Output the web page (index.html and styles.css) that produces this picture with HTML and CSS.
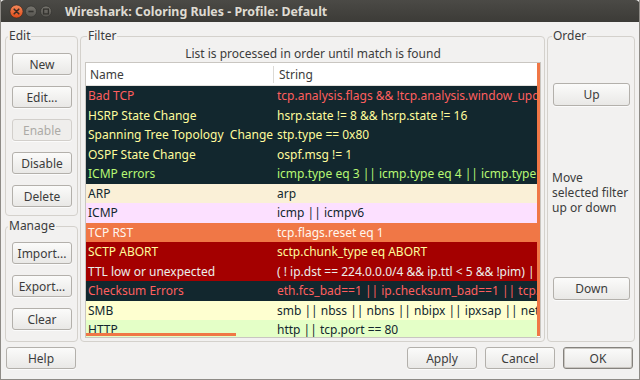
FILE: index.html
```html
<!DOCTYPE html>
<html lang="en">
<head>
    <meta charset="UTF-8">
    <title>Wireshark: Coloring Rules - Profile: Default</title>
    <link rel="stylesheet" href="styles.css">
</head>
<body>
<div class="window">

    <!-- Title bar -->
    <div class="titlebar">
        <svg class="wm-buttons" width="60" height="22" viewBox="0 0 60 22">
            <defs>
                <linearGradient id="close" x1="0" y1="0" x2="0" y2="1">
                    <stop offset="0" stop-color="#f58a5c"/>
                    <stop offset="1" stop-color="#df4a17"/>
                </linearGradient>
                <linearGradient id="grey" x1="0" y1="0" x2="0" y2="1">
                    <stop offset="0" stop-color="#77756f"/>
                    <stop offset="1" stop-color="#56544f"/>
                </linearGradient>
            </defs>
            <circle cx="16.5" cy="11.5" r="6.5" fill="url(#close)" stroke="#3a2a22" stroke-width="0.6"/>
            <path d="M14.2 9.2 L18.8 13.8 M18.8 9.2 L14.2 13.8" stroke="#3b2a22" stroke-width="1.6" stroke-linecap="round"/>
            <circle cx="31" cy="11.5" r="5.5" fill="url(#grey)" stroke="#2e2d2a" stroke-width="0.6"/>
            <path d="M28.4 11.5 H33.6" stroke="#34332f" stroke-width="1.6"/>
            <circle cx="46" cy="11.5" r="5.5" fill="url(#grey)" stroke="#2e2d2a" stroke-width="0.6"/>
            <rect x="43.6" y="9.1" width="4.8" height="4.8" fill="none" stroke="#34332f" stroke-width="1.3"/>
        </svg>
        <span class="title">Wireshark: Coloring Rules - Profile: Default</span>
    </div>

    <div class="content">

        <!-- Left column: Edit / Manage -->
        <div class="left">
            <fieldset class="group edit">
                <legend>Edit</legend>
                <div class="btn-col">
                    <button class="btn">New</button>
                    <button class="btn">Edit...</button>
                    <button class="btn" disabled>Enable</button>
                    <button class="btn">Disable</button>
                    <button class="btn">Delete</button>
                </div>
            </fieldset>
            <fieldset class="group manage">
                <legend>Manage</legend>
                <div class="btn-col">
                    <button class="btn">Import...</button>
                    <button class="btn">Export...</button>
                    <button class="btn">Clear</button>
                </div>
            </fieldset>
        </div>

        <!-- Filter list -->
        <fieldset class="group filter">
            <legend>Filter</legend>
            <div class="note">List is processed in order until match is found</div>
            <div class="list">
                <div class="list-head">
                    <div class="head-cell">Name</div>
                    <div class="head-cell">String</div>
                </div>
                <div class="rows">
                    <div class="row dark red"><span>Bad TCP</span><span>tcp.analysis.flags &amp;&amp; !tcp.analysis.window_update</span></div>
                    <div class="row dark yellow"><span>HSRP State Change</span><span>hsrp.state != 8 &amp;&amp; hsrp.state != 16</span></div>
                    <div class="row dark yellow"><span>Spanning Tree Topology&nbsp; Change</span><span>stp.type == 0x80</span></div>
                    <div class="row dark yellow"><span>OSPF State Change</span><span>ospf.msg != 1</span></div>
                    <div class="row dark green"><span>ICMP errors</span><span>icmp.type eq 3 || icmp.type eq 4 || icmp.type eq 5 || icmp.type eq 11</span></div>
                    <div class="row arp"><span>ARP</span><span>arp</span></div>
                    <div class="row icmp"><span>ICMP</span><span>icmp || icmpv6</span></div>
                    <div class="row selected"><span>TCP RST</span><span>tcp.flags.reset eq 1</span></div>
                    <div class="row alert yellow"><span>SCTP ABORT</span><span>sctp.chunk_type eq ABORT</span></div>
                    <div class="row alert pale"><span>TTL low or unexpected</span><span>( ! ip.dst == 224.0.0.0/4 &amp;&amp; ip.ttl &lt; 5 &amp;&amp; !pim) || (ip.dst == 224.0.0.0/24 &amp;&amp; ip.ttl != 1)</span></div>
                    <div class="row dark red"><span>Checksum Errors</span><span>eth.fcs_bad==1 || ip.checksum_bad==1 || tcp.checksum_bad==1 || udp.checksum_bad==1</span></div>
                    <div class="row smb"><span>SMB</span><span>smb || nbss || nbns || nbipx || ipxsap || netbios</span></div>
                    <div class="row http"><span>HTTP</span><span>http || tcp.port == 80</span></div>
                </div>
                <!-- overlay scrollbars -->
                <div class="scroll-v"></div>
                <div class="scroll-h"></div>
            </div>
        </fieldset>

        <!-- Order -->
        <fieldset class="group order">
            <legend>Order</legend>
            <button class="btn up">Up</button>
            <div class="hint">Move selected filter up or down</div>
            <button class="btn down">Down</button>
        </fieldset>
    </div>

    <!-- Bottom buttons -->
    <div class="footer">
        <button class="btn wide">Help</button>
        <div class="actions">
            <button class="btn wide">Apply</button>
            <button class="btn wide">Cancel</button>
            <button class="btn wide default">OK</button>
        </div>
    </div>
</div>
</body>
</html>
```

FILE: styles.css
```css
/* Global */
* {
    box-sizing: border-box;
}

body {
    margin: 0;
    font-family: "Noto Sans", "Open Sans", sans-serif;
    font-size: 12px;
    color: #3c3c3c;
    background: #f2f1f0;
}

.window {
    width: 640px;
    height: 380px;
    display: flex;
    flex-direction: column;
    border: 1px solid #8e8b86;
    border-top: none;
    overflow: hidden;
}

/* Title bar */
.titlebar {
    height: 22px;
    flex: 0 0 22px;
    display: flex;
    align-items: center;
    margin: 0 -1px;
    background: linear-gradient(#4b4a46, #3c3b37);
    border-radius: 5px 5px 0 0;
}

.wm-buttons {
    flex: 0 0 60px;
}

.title {
    margin-left: 5px;
    font-weight: bold;
    font-size: 12.4px;
    color: #dfdbd2;
    white-space: nowrap;
}

/* Layout */
.content {
    display: flex;
    gap: 2px;
    height: 320px;
    padding: 6px 0 0 4px;
}

.left {
    width: 73px;
    display: flex;
    flex-direction: column;
    gap: 2px;
}

/* Frames */
.group {
    margin: 0;
    padding: 0;
    min-width: 0;
    border: 1px solid #d4d1cc;
    border-radius: 4px;
}

.group legend {
    margin-left: 2px;
    padding: 0 1px;
    line-height: 16px;
    color: #3c3c3c;
}

.edit {
    height: 188px;
}

.manage {
    flex: 1;
}

.btn-col {
    display: flex;
    flex-direction: column;
    gap: 11px;
    padding: 9px 4px 0 6px;
}

.manage .btn-col {
    padding-top: 8px;
}

/* Buttons */
.btn {
    height: 22px;
    width: 60px;
    padding: 0;
    font-family: inherit;
    font-size: 12px;
    color: #3c3c3c;
    background: linear-gradient(#fbfbfa, #e9e8e6);
    border: 1px solid #b3b0ab;
    border-radius: 3px;
    box-shadow: 0 1px 0 rgba(255, 255, 255, 0.7);
}

.btn:disabled {
    color: #acaaa6;
    background: #efeeec;
    border-color: #d2cfcb;
}

.btn.default {
    border-color: #85827d;
    box-shadow: inset 0 0 0 1px #c9c6c1;
}

/* Filter frame */
.filter {
    flex: 0 0 465px;
    display: flex;
    flex-direction: column;
    padding: 0 3px 3px 4px;
}

.note {
    padding-top: 2px;
    line-height: 16px;
    text-align: center;
}

.list {
    position: relative;
    flex: 1;
    overflow: hidden;
    background: #ffffff;
    border: 1px solid #c9c6c1;
}

.list-head {
    display: grid;
    grid-template-columns: 187px minmax(0, 1fr);
    height: 23px;
    border-bottom: 1px solid #e4e2de;
}

.head-cell {
    padding: 4px 4px 0 4px;
    line-height: 16px;
}

.head-cell + .head-cell {
    border-left: 1px solid #dcdad6;
    margin: 3px 0 2px;
    padding: 1px 6px 0 5px;
}

.row {
    display: grid;
    grid-template-columns: 187px minmax(0, 1fr);
    height: 19.5px;
    line-height: 19.5px;
    white-space: nowrap;
    margin-right: 3px;
    color: #12272e;
}

.row span {
    overflow: hidden;
    padding-left: 2px;
}

.row span + span {
    padding-left: 4px;
}

/* Colouring rules */
.dark { background: #12272e; }
.alert { background: #a40000; }
.red { color: #ff5f5f; }
.yellow { color: #fffc9c; }
.green { color: #b7f774; }
.pale { color: #eceeeb; }
.arp { background: #faf0d7; }
.icmp { background: #fce0ff; }
.smb { background: #feffd0; }
.http { background: #e4ffc7; }

.selected {
    background: #f07746;
    color: #fff6ee;
}

/* Overlay scrollbars */
.scroll-v {
    position: absolute;
    top: 0;
    right: 0;
    width: 3px;
    height: 273px;
    background: #f07746;
}

.scroll-h {
    position: absolute;
    left: 0;
    bottom: 1px;
    width: 150px;
    height: 3px;
    background: #f07746;
}

/* Order frame */
.order {
    flex: 0 0 88px;
    display: flex;
    flex-direction: column;
    padding: 0 2px;
}

.order .btn {
    width: 77px;
    height: 23px;
    margin-left: 3px;
}

.up {
    margin-top: 39px;
}

.hint {
    margin: 64px 0 0 2px;
    line-height: 15px;
}

.down {
    margin-top: 62px;
}

/* Footer */
.footer {
    display: flex;
    padding: 5px 6px 0 5px;
}

.btn.wide {
    width: 70px;
}

.actions {
    margin-left: auto;
    display: flex;
    gap: 8px;
}
```
